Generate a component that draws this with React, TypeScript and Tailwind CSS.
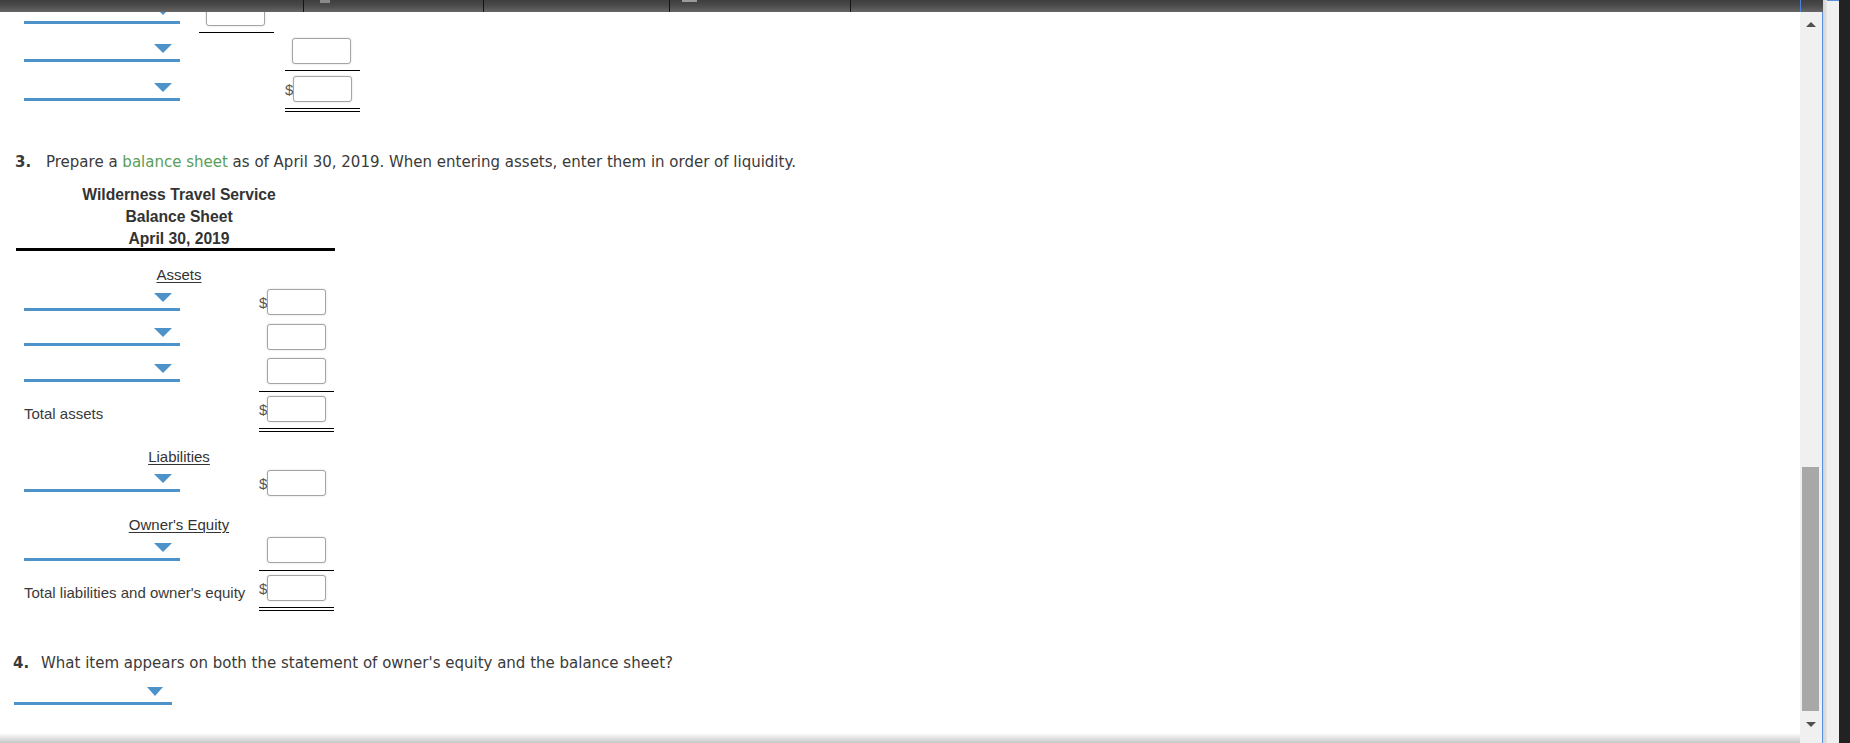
type CellProps = {
  dollar?: boolean;
  pad: string;
  rule?: "single" | "double";
};

const tableFont = "font-['Liberation_Sans',Arial,sans-serif]";
const questionFont = "font-['DejaVu_Sans',Verdana,sans-serif]";

function Dropdown({ wide = false }: { wide?: boolean }) {
  return (
    <div
      className={`flex h-[21px] items-start justify-end border-b-[3px] border-[#4d92c9] pt-[3px] ${
        wide ? "w-[158px] pr-[9px]" : "w-[156px] pr-[8px]"
      }`}
    >
      <span
        className={`h-0 w-0 border-t-[9px] border-t-[#4d92c9] border-x-transparent ${
          wide ? "border-x-[8px]" : "border-x-[9px]"
        }`}
      />
    </div>
  );
}

function Box() {
  return (
    <div className="h-[26px] w-[59px] rounded-[3px] border border-[#a5a5a5] bg-white shadow-[0_0_2px_rgba(0,0,0,0.18)]" />
  );
}

function Cell({ dollar, pad, rule }: CellProps) {
  const ruleClass =
    rule === "single"
      ? "border-b border-black"
      : rule === "double"
        ? "border-b-4 border-double border-black"
        : "";
  return (
    <div className={`flex h-full w-[75px] items-start ${pad} ${ruleClass}`}>
      <span className="flex h-[26px] w-[8px] items-center text-[15px] leading-none text-[#555]">
        {dollar ? "$" : ""}
      </span>
      <Box />
    </div>
  );
}

function Heading({ children }: { children: string }) {
  return (
    <div className="ml-[24px] h-[18px] w-[310px] text-center text-[15px] leading-[18px] text-[#333] underline decoration-1 underline-offset-2">
      {children}
    </div>
  );
}

export default function App() {
  return (
    <div className="flex h-[743px] w-[1850px] overflow-hidden bg-white">
      <div className="flex w-[1823px] flex-col">
        {/* toolbar */}
        <div className="flex h-[12px] w-full bg-gradient-to-b from-[#3e3e3e] via-[#4c4c4c] to-[#666666]">
          <div className="w-[304px] border-r border-[#151515]" />
          <div className="flex w-[180px] items-start border-r border-[#151515] pl-[16px]">
            <span className="h-[3px] w-[10px] bg-[#8a8a8a]" />
          </div>
          <div className="w-[186px] border-r border-[#151515]" />
          <div className="flex w-[181px] items-start border-r border-[#151515] pl-[12px]">
            <span className="h-[2px] w-[15px] bg-[#9a9a9a]" />
          </div>
          <div className="w-[950px] border-r border-[#4c86dc]" />
          <div className="flex-1" />
        </div>

        <div className="flex flex-1 border-r border-[#5b8fe0]">
          {/* page content */}
          <div className="relative flex-1 overflow-hidden">
            <div className={`-mt-[12px] ${tableFont}`}>
              {/* tail of the previous requirement */}
              <div className="flex h-[33px]">
                <div className="w-[199px] pl-[24px] pt-[3px]">
                  <Dropdown />
                </div>
                <div className="h-full w-[75px] border-b border-black pl-[7px]">
                  <Box />
                </div>
              </div>
              <div className="flex h-[38px]">
                <div className="w-[285px] pl-[24px] pt-[8px]">
                  <Dropdown />
                </div>
                <div className="h-full w-[75px] border-b border-black pl-[7px] pt-[5px]">
                  <Box />
                </div>
              </div>
              <div className="flex h-[41px]">
                <div className="w-[285px] pl-[24px] pt-[9px]">
                  <Dropdown />
                </div>
                <Cell dollar pad="pt-[5px]" rule="double" />
              </div>

              {/* requirement 3 */}
              <p className={`mt-[40px] pl-[15px] text-[15px] leading-[20px] text-[#3a3a3a] ${questionFont}`}>
                <span className="inline-block w-[31px] font-bold">3.</span>
                Prepare a <span className="text-[#5a9e5a]">balance sheet</span> as of April 30, 2019. When
                entering assets, enter them in order of liquidity.
              </p>

              <div className="mt-[12px] ml-[16px] h-[67px] w-[319px] border-b-[3px] border-black pl-[7px] text-center text-[15.7px] font-bold leading-[22px] text-[#333]">
                <div>Wilderness Travel Service</div>
                <div>Balance Sheet</div>
                <div>April 30, 2019</div>
              </div>

              <div className="mt-[15px]">
                <Heading>Assets</Heading>
              </div>
              <div className="flex h-[35px]">
                <div className="w-[259px] pl-[24px] pt-[6px]">
                  <Dropdown />
                </div>
                <Cell dollar pad="pt-[5px]" />
              </div>
              <div className="flex h-[35px]">
                <div className="w-[259px] pl-[24px] pt-[6px]">
                  <Dropdown />
                </div>
                <Cell pad="pt-[5px]" />
              </div>
              <div className="flex h-[38px]">
                <div className="w-[259px] pl-[24px] pt-[7px]">
                  <Dropdown />
                </div>
                <Cell pad="pt-[4px]" rule="single" />
              </div>
              <div className="flex h-[40px]">
                <div className="w-[259px] pl-[24px] pt-[13px] text-[15px] leading-[18px] text-[#3a3a3a]">
                  Total assets
                </div>
                <Cell dollar pad="pt-[4px]" rule="double" />
              </div>

              <div className="mt-[16px]">
                <Heading>Liabilities</Heading>
              </div>
              <div className="flex h-[34px]">
                <div className="w-[259px] pl-[24px] pt-[5px]">
                  <Dropdown />
                </div>
                <Cell dollar pad="pt-[4px]" />
              </div>

              <div className="mt-[16px]">
                <Heading>Owner's Equity</Heading>
              </div>
              <div className="flex h-[37px]">
                <div className="w-[259px] pl-[24px] pt-[6px]">
                  <Dropdown />
                </div>
                <Cell pad="pt-[3px]" rule="single" />
              </div>
              <div className="flex h-[40px]">
                <div className="w-[259px] pl-[24px] pt-[13px] text-[15px] leading-[18px] text-[#3a3a3a]">
                  Total liabilities and owner's equity
                </div>
                <Cell dollar pad="pt-[4px]" rule="double" />
              </div>

              {/* requirement 4 */}
              <p className={`mt-[42px] pl-[13px] text-[15px] leading-[20px] text-[#3a3a3a] ${questionFont}`}>
                <span className="inline-block w-[28px] font-bold">4.</span>
                What item appears on both the statement of owner's equity and the balance sheet?
              </p>
              <div className="mt-[11px] ml-[14px]">
                <Dropdown wide />
              </div>
            </div>
            <div className="pointer-events-none absolute inset-x-0 bottom-0 h-[10px] bg-gradient-to-b from-transparent to-[rgba(0,0,0,0.22)]" />
          </div>

          {/* scrollbar */}
          <div className="flex w-[22px] flex-col items-center bg-[#f0f0f0] pr-[1px]">
            <span className="mt-[10px] h-0 w-0 border-x-[5px] border-b-[5px] border-x-transparent border-b-[#505050]" />
            <div className="flex-1" />
            <div className="h-[244px] w-[17px] bg-[#a8a8a8]" />
            <span className="mt-[11px] mb-[16px] h-0 w-0 border-x-[5px] border-t-[5px] border-x-transparent border-t-[#505050]" />
          </div>
        </div>
      </div>

      <div className="w-[4px] bg-gradient-to-r from-[#d2d2d2] to-[#e6e6e6]" />
      <div className="w-[12px] border-t border-[#5b8fe0] bg-[#f0f0f0]" />
      <div className="flex-1 bg-[#222222]" />
    </div>
  );
}
